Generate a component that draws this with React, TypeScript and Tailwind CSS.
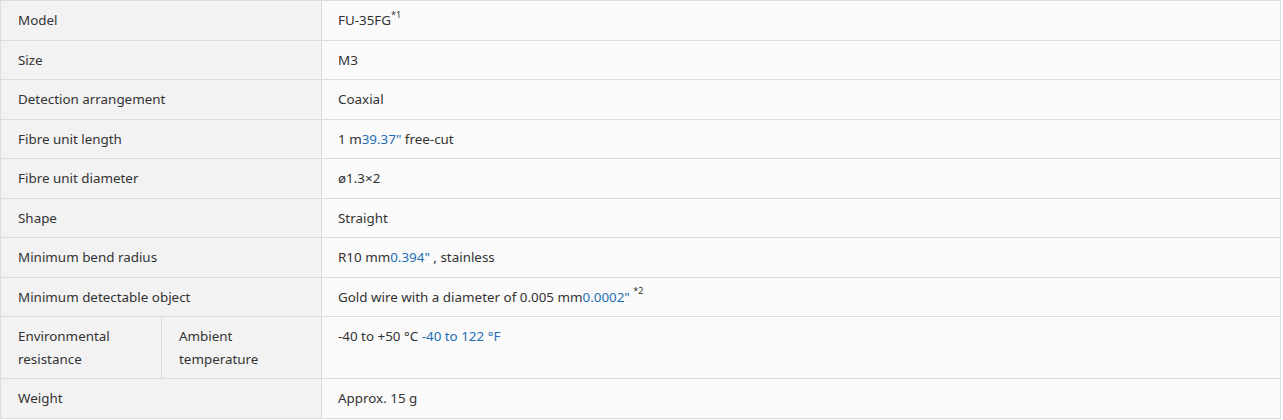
const Blue = ({ children }: any) => <span className="text-[#1e6eb4]">{children}</span>

const rows: any[] = [
    { label: 'Model', value: <>FU-35FG<sup className="text-[9px] align-[3px]">*1</sup></> },
    { label: 'Size', value: 'M3' },
    { label: 'Detection arrangement', value: 'Coaxial' },
    { label: 'Fibre unit length', value: <>1 m<Blue>39.37"</Blue> free-cut</> },
    { label: 'Fibre unit diameter', value: 'ø1.3×2' },
    { label: 'Shape', value: 'Straight' },
    { label: 'Minimum bend radius', value: <>R10 mm<Blue>0.394"</Blue> , stainless</> },
    {
        label: 'Minimum detectable object',
        value: (
            <>
                Gold wire with a diameter of 0.005 mm<Blue>0.0002"</Blue>{' '}
                <sup className="text-[9px] align-[3px]">*2</sup>
            </>
        ),
    },
]

const App = () => {
    const th = 'border border-[#dcdcdc] bg-[#f2f2f2] px-[17px] py-2 text-left align-top font-normal'
    const td = 'border border-[#dcdcdc] bg-[#fafafa] px-4 py-2 align-top'

    return (
        <div className="bg-white">
            <table
                className="w-[1281px] table-fixed border-collapse text-[13.4px] leading-[22.5px] text-[#333]"
                style={{ fontFamily: '"Noto Sans", "Open Sans", sans-serif' }}
            >
                <colgroup>
                    <col className="w-[161px]" />
                    <col className="w-[160px]" />
                    <col />
                </colgroup>
                <tbody>
                    {rows.map((row) => (
                        <tr key={row.label}>
                            <th colSpan={2} className={th}>
                                {row.label}
                            </th>
                            <td className={td}>{row.value}</td>
                        </tr>
                    ))}
                    <tr>
                        <th className={th}>
                            Environmental
                            <br />
                            resistance
                        </th>
                        <th className={th}>
                            Ambient
                            <br />
                            temperature
                        </th>
                        <td className={td}>
                            -40 to +50 °C <Blue>-40 to 122 °F</Blue>
                        </td>
                    </tr>
                    <tr>
                        <th colSpan={2} className={th}>
                            Weight
                        </th>
                        <td className={td}>Approx. 15 g</td>
                    </tr>
                </tbody>
            </table>
        </div>
    )
}
export default App
